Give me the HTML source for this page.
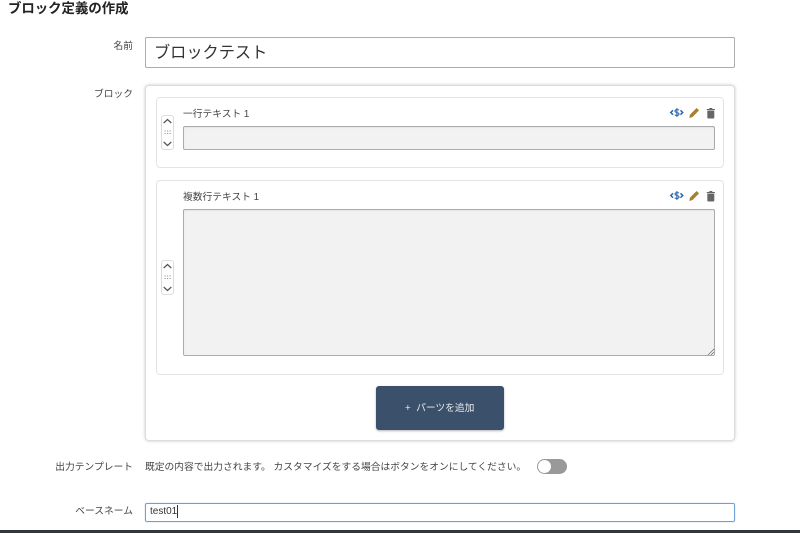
<!DOCTYPE html>
<html lang="ja">
<head>
<meta charset="utf-8">
<style>
html,body{margin:0;padding:0;background:#fff;}
body{width:800px;height:533px;position:relative;overflow:hidden;font-family:"Liberation Sans","Noto Sans CJK JP",sans-serif;color:#333;}
#w{position:absolute;left:0;top:0;width:800px;height:533px;filter:blur(.3px);}
.a{position:absolute;box-sizing:border-box;}
.t{position:absolute;white-space:nowrap;line-height:14px;font-size:9.75px;color:#444;}
.r{text-align:right;right:667px;}
.field{background:#f2f2f2;border:1px solid #ababab;border-radius:2px;box-shadow:inset 0 1px 1px rgba(0,0,0,.05);}
.item{left:156px;width:567.500px;background:#fff;border:1px solid #e4e4e4;border-radius:4px;}
.handle{left:161px;width:13px;height:35px;background:#fff;border:1px solid #dcdcdc;border-radius:3px;}
svg{position:absolute;overflow:visible;}
</style>
</head>
<body>
<div id="w">
<div class="t" style="left:8px;top:2px;font-size:13.4px;font-weight:700;color:#222;">ブロック定義の作成</div>

<div class="t r" style="top:40px;">名前</div>
<div class="a" style="left:145px;top:37px;width:590px;height:31px;border:1px solid #adadad;border-radius:2px;"></div>
<div class="t" style="left:154px;top:44px;font-size:16.2px;line-height:18px;color:#333;">ブロックテスト</div>

<div class="t r" style="top:88px;">ブロック</div>
<div class="a" style="left:145px;top:85px;width:590px;height:356px;background:#fff;border-radius:4px;border:1px solid #ddd;box-shadow:0 0 3px rgba(0,0,0,.22);"></div>

<!-- item 1 -->
<div class="a item" style="top:97px;height:71px;"></div>
<div class="t" style="left:183px;top:108px;">一行テキスト 1</div>
<div class="a field" style="left:183px;top:126px;width:532px;height:24px;"></div>
<div class="a handle" style="top:115px;"></div>
<svg style="left:161px;top:115px" width="13" height="35" fill="none" stroke="#555" stroke-width="1.200">
<path d="M2.700 8 L6.500 4.500 L10.300 8"/><path d="M2.700 27 L6.500 30.500 L10.300 27"/>
<path d="M3.500 16h1.200M6 16h1.200M8.500 16h1.200M3.500 18.500h1.200M6 18.500h1.200M8.500 18.500h1.200" stroke="#999" stroke-width="1"/>
</svg>
<svg style="left:670px;top:106.500px" width="46" height="12">
<path d="M3 3.300 L.8 5.500 L3 7.700 M10.500 3.300 L12.700 5.500 L10.500 7.700" fill="none" stroke="#2a66b0" stroke-width="1.500"/>
<path d="M9 3.200C8.300 2.400 5 2.300 5 4.100C5 6 9 5 9 7C9 8.800 5.600 8.700 4.800 7.800M6.900 1v9" fill="none" stroke="#2a66b0" stroke-width="1.100"/>
<path d="M19.300 11 L20 7.600 L26.600 1 L29 3.400 L22.600 10 Z" fill="#a5812b"/>
<path d="M37.300 3.500h7v7a1 1 0 0 1-1 1h-5a1 1 0 0 1-1-1z M36.700 2h8.200v1h-8.200z M39.300 1h3v1h-3z" fill="#666"/>
</svg>

<!-- item 2 -->
<div class="a item" style="top:180px;height:195px;"></div>
<div class="t" style="left:183px;top:191px;">複数行テキスト 1</div>
<div class="a field" style="left:183px;top:209px;width:532px;height:147px;"></div>
<svg style="left:707px;top:348px" width="8" height="8" fill="none" stroke="#777" stroke-width=".8"><path d="M1 7 L7 1M4 7 L7 4"/></svg>
<div class="a handle" style="top:260px;"></div>
<svg style="left:161px;top:260px" width="13" height="35" fill="none" stroke="#555" stroke-width="1.200">
<path d="M2.700 8 L6.500 4.500 L10.300 8"/><path d="M2.700 27 L6.500 30.500 L10.300 27"/>
<path d="M3.500 16h1.200M6 16h1.200M8.500 16h1.200M3.500 18.500h1.200M6 18.500h1.200M8.500 18.500h1.200" stroke="#999" stroke-width="1"/>
</svg>
<svg style="left:670px;top:189.500px" width="46" height="12">
<path d="M3 3.300 L.8 5.500 L3 7.700 M10.500 3.300 L12.700 5.500 L10.500 7.700" fill="none" stroke="#2a66b0" stroke-width="1.500"/>
<path d="M9 3.200C8.300 2.400 5 2.300 5 4.100C5 6 9 5 9 7C9 8.800 5.600 8.700 4.800 7.800M6.900 1v9" fill="none" stroke="#2a66b0" stroke-width="1.100"/>
<path d="M19.300 11 L20 7.600 L26.600 1 L29 3.400 L22.600 10 Z" fill="#a5812b"/>
<path d="M37.300 3.500h7v7a1 1 0 0 1-1 1h-5a1 1 0 0 1-1-1z M36.700 2h8.200v1h-8.200z M39.300 1h3v1h-3z" fill="#666"/>
</svg>

<!-- add button -->
<div class="a" style="left:376px;top:386px;width:128px;height:44px;background:#3b506b;border-radius:3px;box-shadow:0 1px 2px rgba(0,0,0,.3);"></div>
<div class="t" style="left:405px;top:402px;color:#e8ebef;">+&nbsp; パーツを追加</div>

<!-- template -->
<div class="t r" style="top:461px;">出力テンプレート</div>
<div class="t" style="left:145px;top:461px;">既定の内容で出力されます。 カスタマイズをする場合はボタンをオンにしてください。</div>
<div class="a" style="left:537px;top:458.500px;width:30px;height:15px;background:#999;border-radius:8px;"></div>
<div class="a" style="left:538px;top:459.500px;width:13px;height:13px;background:#fff;border-radius:50%;"></div>

<!-- base name -->
<div class="t r" style="top:505px;">ベースネーム</div>
<div class="a" style="left:145px;top:503px;width:590px;height:19px;border:1px solid #6f9fd8;border-radius:2px;box-shadow:0 0 1px #8fb6e6;"></div>
<div class="t" style="left:150px;top:505px;color:#333;font-size:10px;">test01</div>
<div class="a" style="left:177px;top:505px;width:1px;height:13px;background:#333;"></div>

<!-- bottom bar -->
<div class="a" style="left:0;top:530px;width:800px;height:3px;background:#33363a;"></div>
</div>
</body>
</html>
